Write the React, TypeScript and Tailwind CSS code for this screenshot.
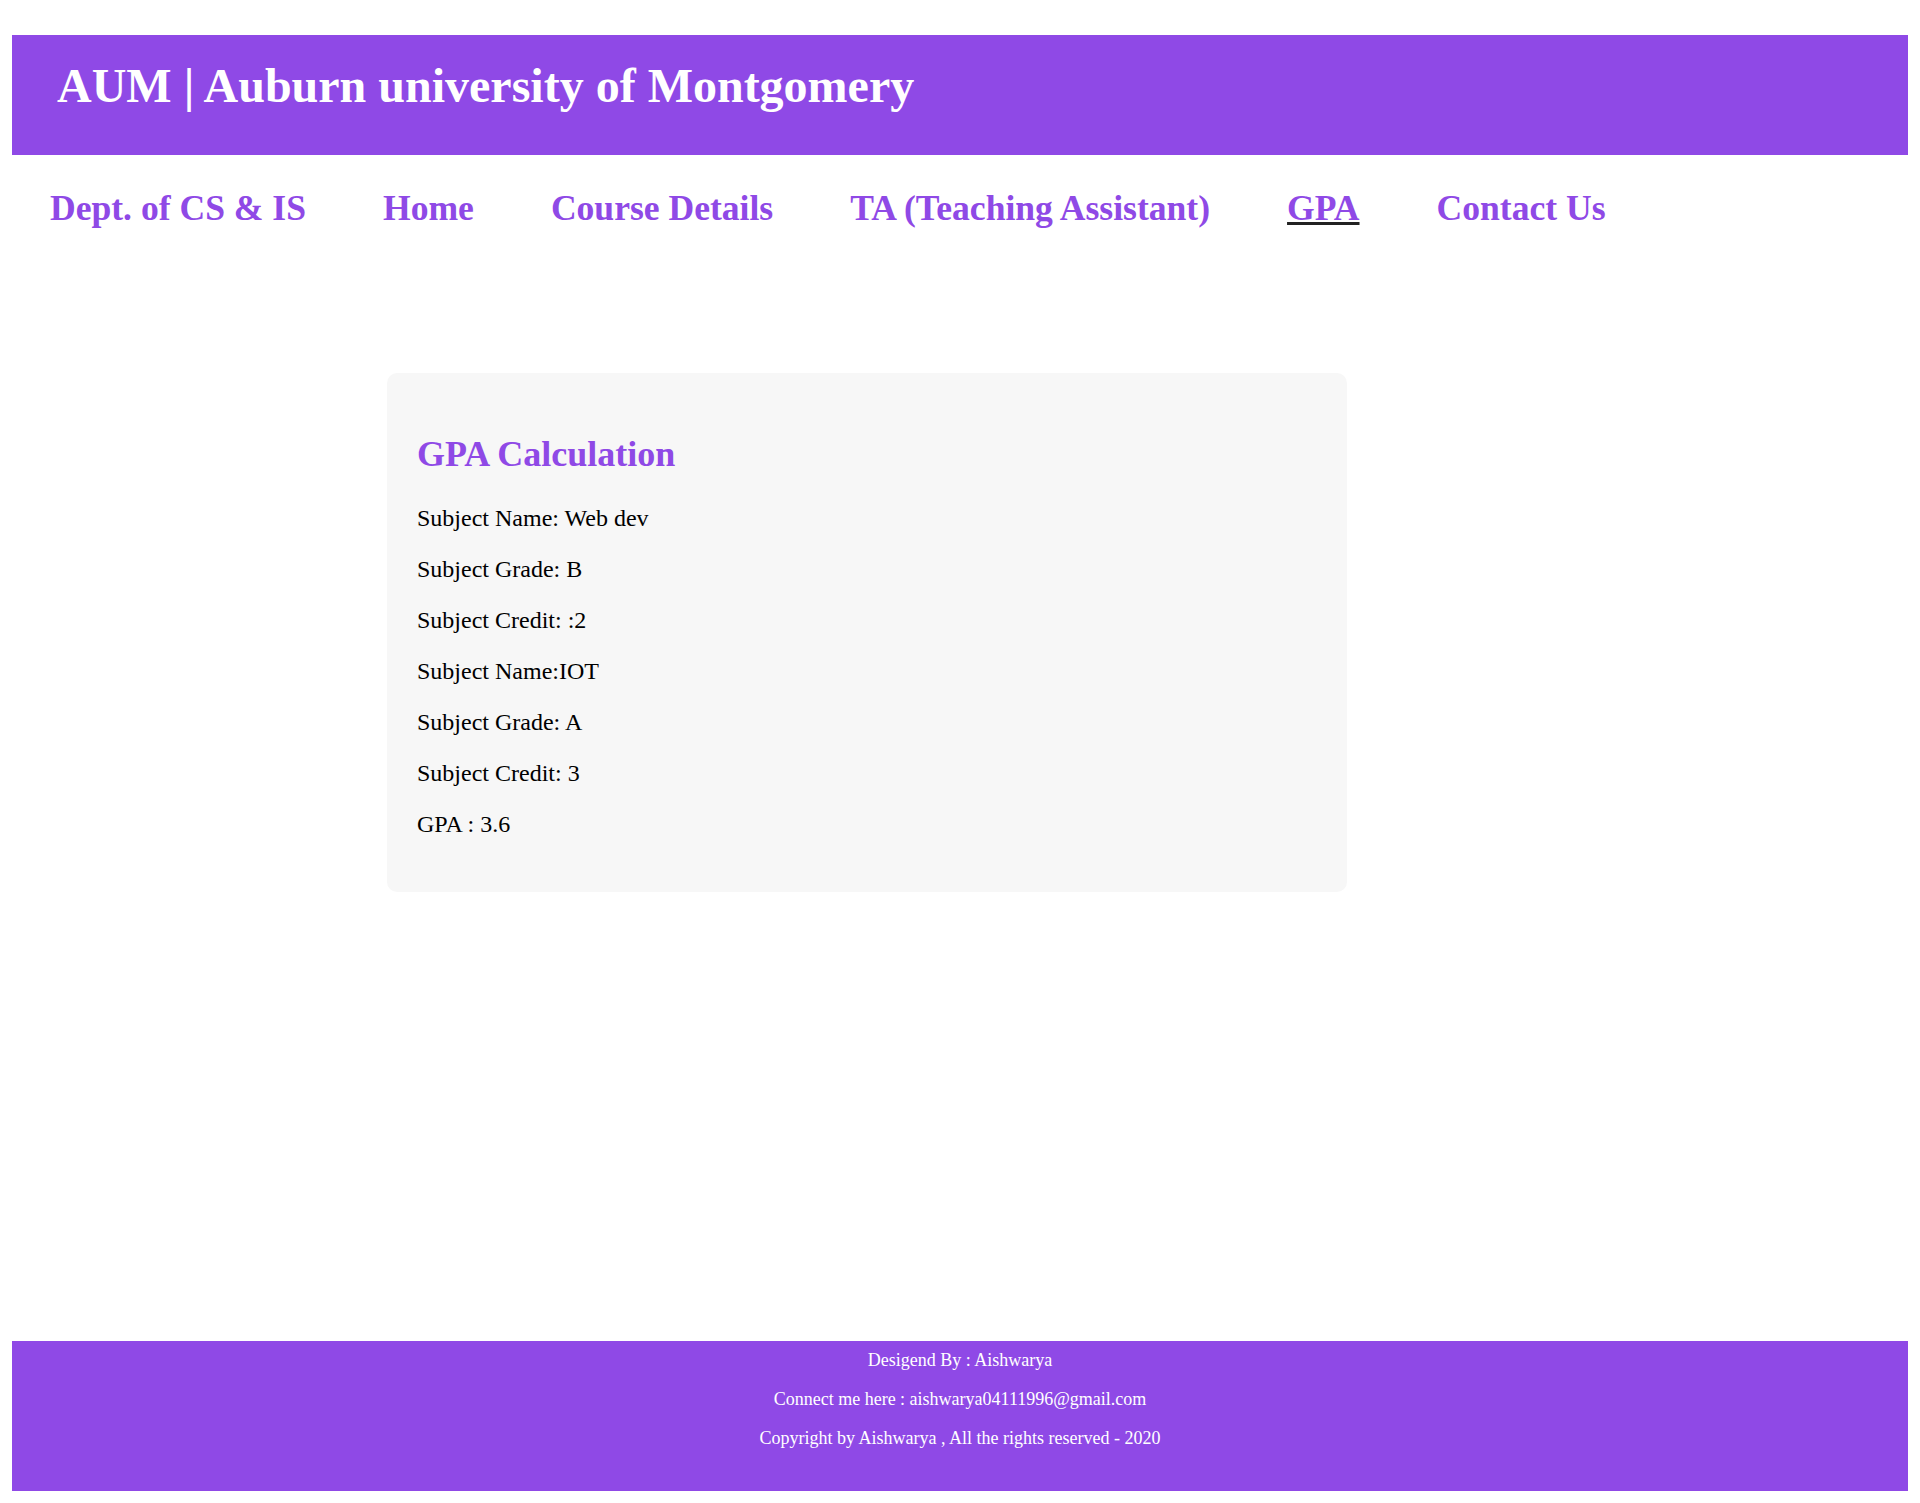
import React from 'react'

const navItems = ['Dept. of CS & IS', 'Home', 'Course Details', 'TA (Teaching Assistant)', 'GPA', 'Contact Us']

const gpaLines = [
  'Subject Name: Web dev',
  'Subject Grade: B',
  'Subject Credit: :2',
  'Subject Name:IOT',
  'Subject Grade: A',
  'Subject Credit: 3',
  'GPA : 3.6',
]

export default function App() {
  return (
    <div className="flex h-[1503px] flex-col bg-white px-[12px] pt-[35px] pb-[12px] font-['Liberation_Serif',serif] text-black">
      <header className="h-[120px] shrink-0 bg-[#8f49e6] pl-[45px] pt-[23px]">
        <h1 className="text-[48px] font-bold leading-[55px] text-white">AUM | Auburn university of Montgomery</h1>
      </header>

      <nav className="mt-[33px] flex h-[41px] shrink-0 gap-[77px] pl-[38px]">
        {navItems.map((item) => (
          <a
            key={item}
            href="#"
            className={
              item === 'GPA'
                ? 'text-[35.6px] font-bold leading-[41px] text-[#8f49e6] underline decoration-[#222] decoration-[3px]'
                : 'text-[35.6px] font-bold leading-[41px] text-[#8f49e6]'
            }
          >
            {item}
          </a>
        ))}
      </nav>

      <main className="mt-[144px] ml-[375px] w-[960px] rounded-[10px] bg-[#f7f7f7] p-[30px]">
        <h2 className="mt-[31px] mb-[30px] text-[36px] font-bold leading-[41px] text-[#8f49e6]">GPA Calculation</h2>
        <div className="flex flex-col gap-[24px]">
          {gpaLines.map((line) => (
            <p key={line} className="text-[24px] leading-[27px]">
              {line}
            </p>
          ))}
        </div>
        <div className="h-[24px]" />
      </main>

      <footer className="mt-auto flex h-[150px] shrink-0 flex-col items-center gap-[18px] bg-[#8f49e6] pt-[9px] text-[18px] leading-[21px] text-white">
        <p>Desigend By : Aishwarya</p>
        <p>Connect me here : aishwarya04111996@gmail.com</p>
        <p>Copyright by Aishwarya , All the rights reserved - 2020</p>
      </footer>
    </div>
  )
}
